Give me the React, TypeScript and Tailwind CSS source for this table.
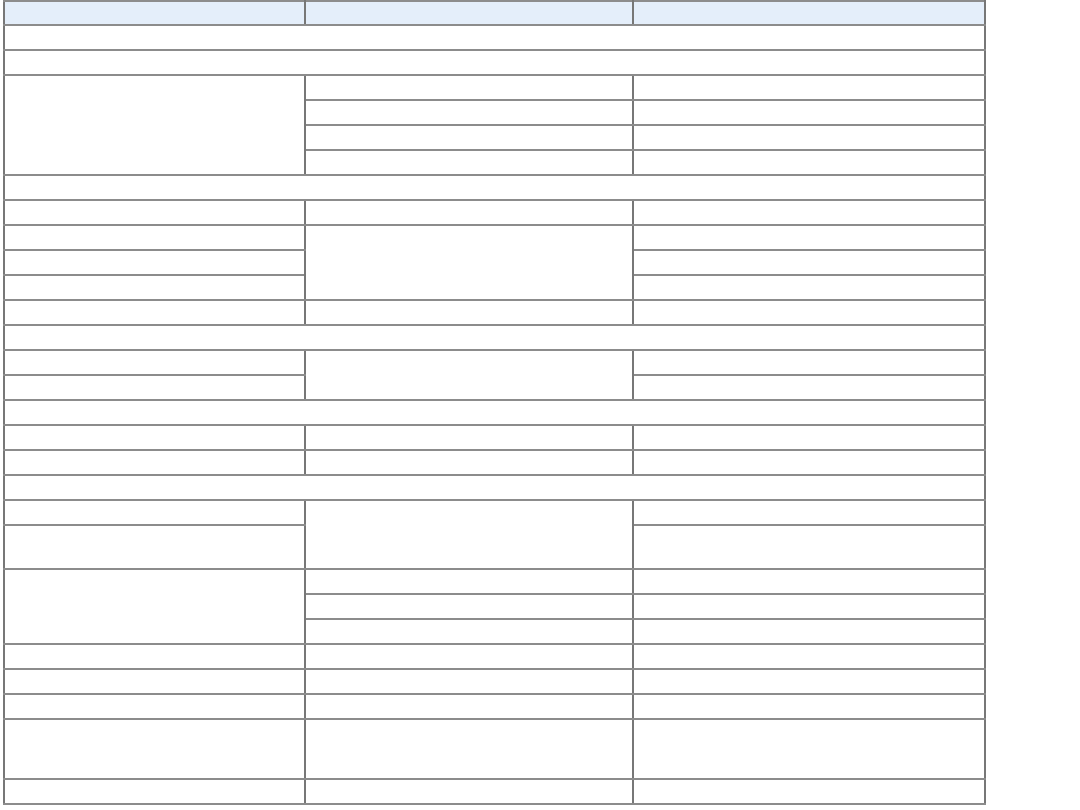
import React from "react";

type Cell = { span?: number; rows?: number };
type Row = { h: number; cells: Cell[]; head?: boolean };

const R = (h: number, cells: Cell[], head = false): Row => ({ h, cells, head });
const three: Cell[] = [{}, {}, {}];
const full: Cell[] = [{ span: 3 }];

const rows: Row[] = [
  R(24, three, true),
  R(25, full),
  R(25, full),
  R(25, [{ rows: 4 }, {}, {}]),
  R(25, [{}, {}]),
  R(25, [{}, {}]),
  R(25, [{}, {}]),
  R(25, full),
  R(25, three),
  R(25, [{}, { rows: 3 }, {}]),
  R(25, [{}, {}]),
  R(25, [{}, {}]),
  R(25, three),
  R(25, full),
  R(25, [{}, { rows: 2 }, {}]),
  R(25, [{}, {}]),
  R(25, full),
  R(25, three),
  R(25, three),
  R(25, full),
  R(25, [{}, { rows: 2 }, {}]),
  R(44, [{}, {}]),
  R(25, [{ rows: 3 }, {}, {}]),
  R(25, [{}, {}]),
  R(25, [{}, {}]),
  R(25, three),
  R(25, three),
  R(25, three),
  R(60, three),
  R(25, three),
];

export default function App() {
  return (
    <div className="w-[1080px] h-[810px] bg-white pl-[3px] pt-[0px] font-['Liberation_Sans',sans-serif] text-[0px] leading-none">
      <table className="w-[981px] border-collapse table-fixed border-r-2 border-r-[#707070]">
        <colgroup>
          <col className="w-[301px]" />
          <col className="w-[328px]" />
          <col className="w-[352px]" />
        </colgroup>
        <tbody>
          {rows.map((r, i) => (
            <tr key={i} style={{ height: r.h }}>
              {r.cells.map((c, j) => (
                <td
                  key={j}
                  colSpan={c.span}
                  rowSpan={c.rows}
                  className={
                    "p-0 border-y-2 border-y-[#8c8c8c] border-x-2 border-x-[#777777] " +
                    (r.head ? "bg-[#e4eefa]" : "bg-white")
                  }
                />
              ))}
            </tr>
          ))}
        </tbody>
      </table>
    </div>
  );
}
